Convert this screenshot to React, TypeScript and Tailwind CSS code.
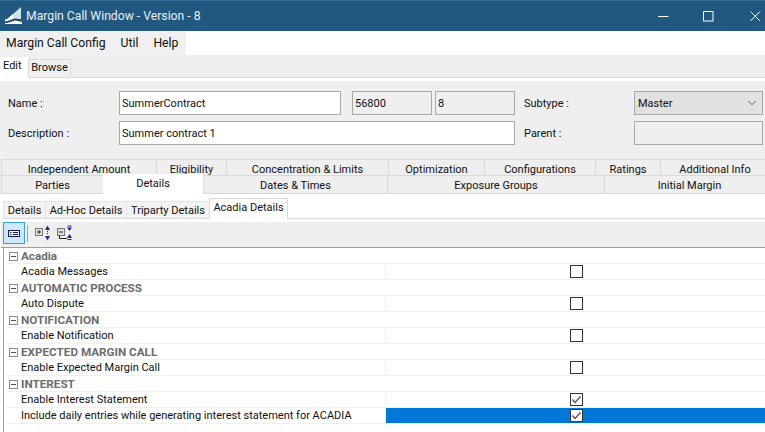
import React from 'react';
import { ChevronDown } from 'lucide-react';

const font = { fontFamily: 'Roboto, "Noto Sans", sans-serif' };

const topTabs = [
  { label: 'Independent Amount', w: 'w-[155px]' },
  { label: 'Eligibility', w: 'w-[70px]' },
  { label: 'Concentration & Limits', w: 'w-[162px]' },
  { label: 'Optimization', w: 'w-[96px]' },
  { label: 'Configurations', w: 'w-[111px]' },
  { label: 'Ratings', w: 'w-[65px]' },
  { label: 'Additional Info', w: 'flex-1 pl-[4px]' },
];

const innerTabs = [
  { label: 'Details', w: 'w-[42px]' },
  { label: 'Ad-Hoc Details', w: 'w-[81px]' },
  { label: 'Triparty Details', w: 'w-[83px]' },
];

const sections = [
  { title: 'Acadia', rows: [{ label: 'Acadia Messages' }] },
  { title: 'AUTOMATIC PROCESS', rows: [{ label: 'Auto Dispute' }] },
  { title: 'NOTIFICATION', rows: [{ label: 'Enable Notification' }] },
  { title: 'EXPECTED MARGIN CALL', rows: [{ label: 'Enable Expected Margin Call' }] },
  {
    title: 'INTEREST',
    rows: [
      { label: 'Enable Interest Statement', checked: true },
      { label: 'Include daily entries while generating interest statement for ACADIA', checked: true, selected: true },
    ],
  },
];

const Logo = () => (
  <svg width="17" height="17" viewBox="0 0 17 17" className="shrink-0">
    <path d="M0 14 L16 0 V12 H0 Z" fill="#cfe2f0" />
    <path d="M0 14 L8 7 V13 H0 Z" fill="#ffffff" />
    <path d="M0 13 H17 V17 H0 Z" fill="#ffffff" />
    <path d="M0 14.5 C5 14 8 11.5 10.5 11.5 C13 11.5 15 13 17 13.5 V15 C14 14.5 12.5 13.5 10.5 13.5 C8 13.5 5 16 0 16 Z" fill="#1b3f66" />
  </svg>
);

const WindowControls = () => (
  <div className="flex items-center h-full">
    <svg width="11" height="11" viewBox="0 0 11 11" className="mr-[34px]">
      <path d="M0 5.5H10.5" stroke="#ffffff" strokeWidth="1" />
    </svg>
    <svg width="11" height="11" viewBox="0 0 11 11" className="mr-[36px]">
      <rect x="0.5" y="0.5" width="9.5" height="9.5" fill="none" stroke="#ffffff" strokeWidth="1" />
    </svg>
    <svg width="11" height="11" viewBox="0 0 11 11" className="mr-[4px]">
      <path d="M0.5 0.5L10 10M10 0.5L0.5 10" stroke="#ffffff" strokeWidth="1" />
    </svg>
  </div>
);

const Checkbox = ({ checked }: { checked?: boolean }) => (
  <svg width="13" height="13" viewBox="0 0 13 13">
    <rect x="0.5" y="0.5" width="12" height="12" fill="#ffffff" stroke="#333333" strokeWidth="1" />
    {checked && <path d="M2.5 6.5L5 9.5L10.5 3.5" fill="none" stroke="#555555" strokeWidth="1.4" />}
  </svg>
);

const PropertiesIcon = () => (
  <svg width="12" height="7" viewBox="0 0 12 7">
    <rect x="0.5" y="0.5" width="11" height="6" fill="#ffffff" stroke="#14145a" />
    <path d="M2 2.5H3.5M2 4.5H3.5M5 2.5H10M5 4.5H10" stroke="#14145a" strokeWidth="1" />
  </svg>
);

const ExpandIcon = () => (
  <svg width="16" height="17" viewBox="0 0 16 17">
    <rect x="0.5" y="3.5" width="7" height="7" fill="#e4e4e4" stroke="#777777" />
    <path d="M2 7H6M4 5V9" stroke="#222222" />
    <path d="M10 5L12.5 0.5L15 5Z" fill="#24248a" />
    <path d="M10 11L12.5 15.5L15 11Z" fill="#24248a" />
    <path d="M12.5 6V10" stroke="#24248a" strokeDasharray="1 1" />
  </svg>
);

const CollapseIcon = () => (
  <svg width="17" height="17" viewBox="0 0 17 17">
    <rect x="0.5" y="3.5" width="7" height="7" fill="#dddddd" stroke="#777777" />
    <path d="M2 7H6" stroke="#222222" />
    <path d="M2.5 10.5V13.5H10" fill="none" stroke="#222222" />
    <path d="M10 2.5L12.5 6L15 2.5Z" fill="#24248a" />
    <path d="M10 13L12.5 9L15 13Z" fill="#24248a" />
    <path d="M10.5 1H14.5M10.5 14.5H14.5" stroke="#24248a" />
  </svg>
);

const MinusBox = () => (
  <svg width="9" height="9" viewBox="0 0 9 9" className="shrink-0">
    <rect x="0.5" y="0.5" width="8" height="8" fill="#ffffff" stroke="#8c8c8c" />
    <path d="M2 4.5H7" stroke="#555555" />
  </svg>
);

export default function App() {
  return (
    <div className="w-[765px] h-[432px] overflow-hidden bg-white text-[11px] text-[#111111] flex flex-col" style={font}>
      {/* title bar */}
      <div className="h-[31px] shrink-0 bg-[#21587f] flex items-center justify-between pl-[5px] border-t border-[#2f6a94]">
        <div className="flex items-center gap-[4px] text-[#e8eff5] text-[12.2px]">
          <Logo />
          <span>Margin Call Window - Version - 8</span>
        </div>
        <WindowControls />
      </div>

      {/* menu */}
      <div className="h-[24px] shrink-0 flex">
        <div className="w-[186px] bg-[#f0f0f0] flex items-center pl-[6px] gap-[15px] text-[12.2px] whitespace-nowrap">
          <span>Margin Call Config</span>
          <span>Util</span>
          <span>Help</span>
        </div>
      </div>

      {/* edit / browse */}
      <div className="h-[23px] shrink-0 bg-[#efefef] border-b border-[#d9d9d9] flex items-end">
        <div className="w-[28px] h-[21px] -mb-px bg-white flex items-center pl-[3px] pb-[2px]">Edit</div>
        <div className="w-[43px] h-[18px] bg-[#f0f0f0] border border-b-0 border-[#d9d9d9] flex items-center justify-center">Browse</div>
      </div>
      <div className="h-[3px] shrink-0 bg-white" />

      {/* form */}
      <div className="h-[78px] shrink-0 bg-[#efefef] pt-[10px] flex flex-col gap-[6px]">
        <div className="h-[24px] flex items-center">
          <div className="w-[111px] ml-[8px] pt-[2px]">Name :</div>
          <div className="w-[222px] h-full bg-white border border-[#a9a9a9] flex items-center px-[2px] pt-[2px]">SummerContract</div>
          <div className="w-[80px] h-full ml-[11px] bg-[#efefef] border border-[#a9a9a9] flex items-center px-[2px] pt-[2px]">56800</div>
          <div className="w-[80px] h-full ml-[3px] bg-[#efefef] border border-[#a9a9a9] flex items-center px-[2px] pt-[2px]">8</div>
          <div className="w-[110px] ml-[9px] pt-[2px]">Subtype :</div>
          <div className="w-[129px] h-full bg-[#e1e1e1] border border-[#a9a9a9] flex items-center justify-between px-[3px]">
            <span className="pt-[2px]">Master</span>
            <ChevronDown size={14} strokeWidth={1.2} className="text-[#222222]" />
          </div>
        </div>
        <div className="h-[24px] flex items-center">
          <div className="w-[111px] ml-[8px] pt-[2px]">Description :</div>
          <div className="w-[396px] h-full bg-white border border-[#a9a9a9] flex items-center px-[2px] pt-[2px]">Summer contract 1</div>
          <div className="w-[110px] ml-[9px] pt-[2px]">Parent :</div>
          <div className="w-[129px] h-full bg-[#efefef] border border-[#a9a9a9]" />
        </div>
      </div>

      {/* main tabs */}
      <div className="h-[35px] shrink-0 bg-[#efefef] pl-px flex flex-col">
        <div className="h-[16px] flex border-t border-[#d9d9d9]">
          {topTabs.map((t) => (
            <div key={t.label} className={`${t.w} border-l border-[#d9d9d9] text-center leading-[19px] whitespace-nowrap overflow-hidden`}>
              {t.label}
            </div>
          ))}
        </div>
        <div className="h-[19px] flex border-t border-b border-[#d9d9d9]">
          <div className="w-[102px] border-l border-[#d9d9d9] text-center leading-[19px]">Parties</div>
          <div className="w-[101px] h-[20px] -mt-[2px] relative bg-white border-r border-[#d9d9d9] text-center leading-[19px]">Details</div>
          <div className="w-[183px] text-center leading-[19px]">Dates &amp; Times</div>
          <div className="w-[217px] border-l border-[#d9d9d9] text-center leading-[19px]">Exposure Groups</div>
          <div className="flex-1 border-l border-[#d9d9d9] pl-[9px] text-center leading-[19px]">Initial Margin</div>
        </div>
      </div>

      {/* inner tabs */}
      <div className="h-[28px] shrink-0 pl-[3px] pb-[3px] bg-white">
        <div className="h-[25px] flex items-end border-b border-[#d9d9d9]">
          {innerTabs.map((t) => (
            <div key={t.label} className={`${t.w} h-[17px] bg-[#f3f3f3] border-l border-t border-[#e3e3e3] text-center leading-[17px] whitespace-nowrap`}>
              {t.label}
            </div>
          ))}
          <div className="w-[79px] h-[21px] -mb-px bg-white border-x border-t border-[#d9d9d9] text-center leading-[18px]">Acadia Details</div>
        </div>
      </div>

      {/* toolbar */}
      <div className="h-[26px] shrink-0 ml-px bg-[#efefef] flex items-start pl-[2px] border-b border-[#a0a0a0]">
        <div className="w-[22px] h-[22px] bg-[#cce8ff] border border-[#3c9fdc] flex items-center justify-center">
          <PropertiesIcon />
        </div>
        <div className="w-px h-[17px] mt-[3px] bg-[#a0a0a0] ml-[2px] mr-[7px]" />
        <div className="mt-[3px] mr-[6px]">
          <ExpandIcon />
        </div>
        <div className="mt-[3px]">
          <CollapseIcon />
        </div>
      </div>

      {/* property grid */}
      <div className="flex-1 ml-[3px] border-l border-[#a0a0a0] pl-px">
        {sections.map((s) => (
          <div key={s.title}>
            <div className="h-[16px] flex items-center pl-[4px] pt-px gap-[3px] border-b border-[#f0f0f0] font-bold text-[11.7px] text-[#6d6d6d]">
              <MinusBox />
              <span className="pt-px">{s.title}</span>
            </div>
            {s.rows.map((r) => (
              <div key={r.label} className="h-[16px] flex border-b border-[#f0f0f0]">
                <div className="w-[381px] shrink-0 pl-[16px] border-r border-[#f0f0f0] leading-[15px] whitespace-nowrap">{r.label}</div>
                <div className={`flex-1 flex items-center justify-center pl-[2px] ${r.selected ? 'bg-[#0078d7]' : ''}`}>
                  <Checkbox checked={r.checked} />
                </div>
              </div>
            ))}
          </div>
        ))}
      </div>
    </div>
  );
}
